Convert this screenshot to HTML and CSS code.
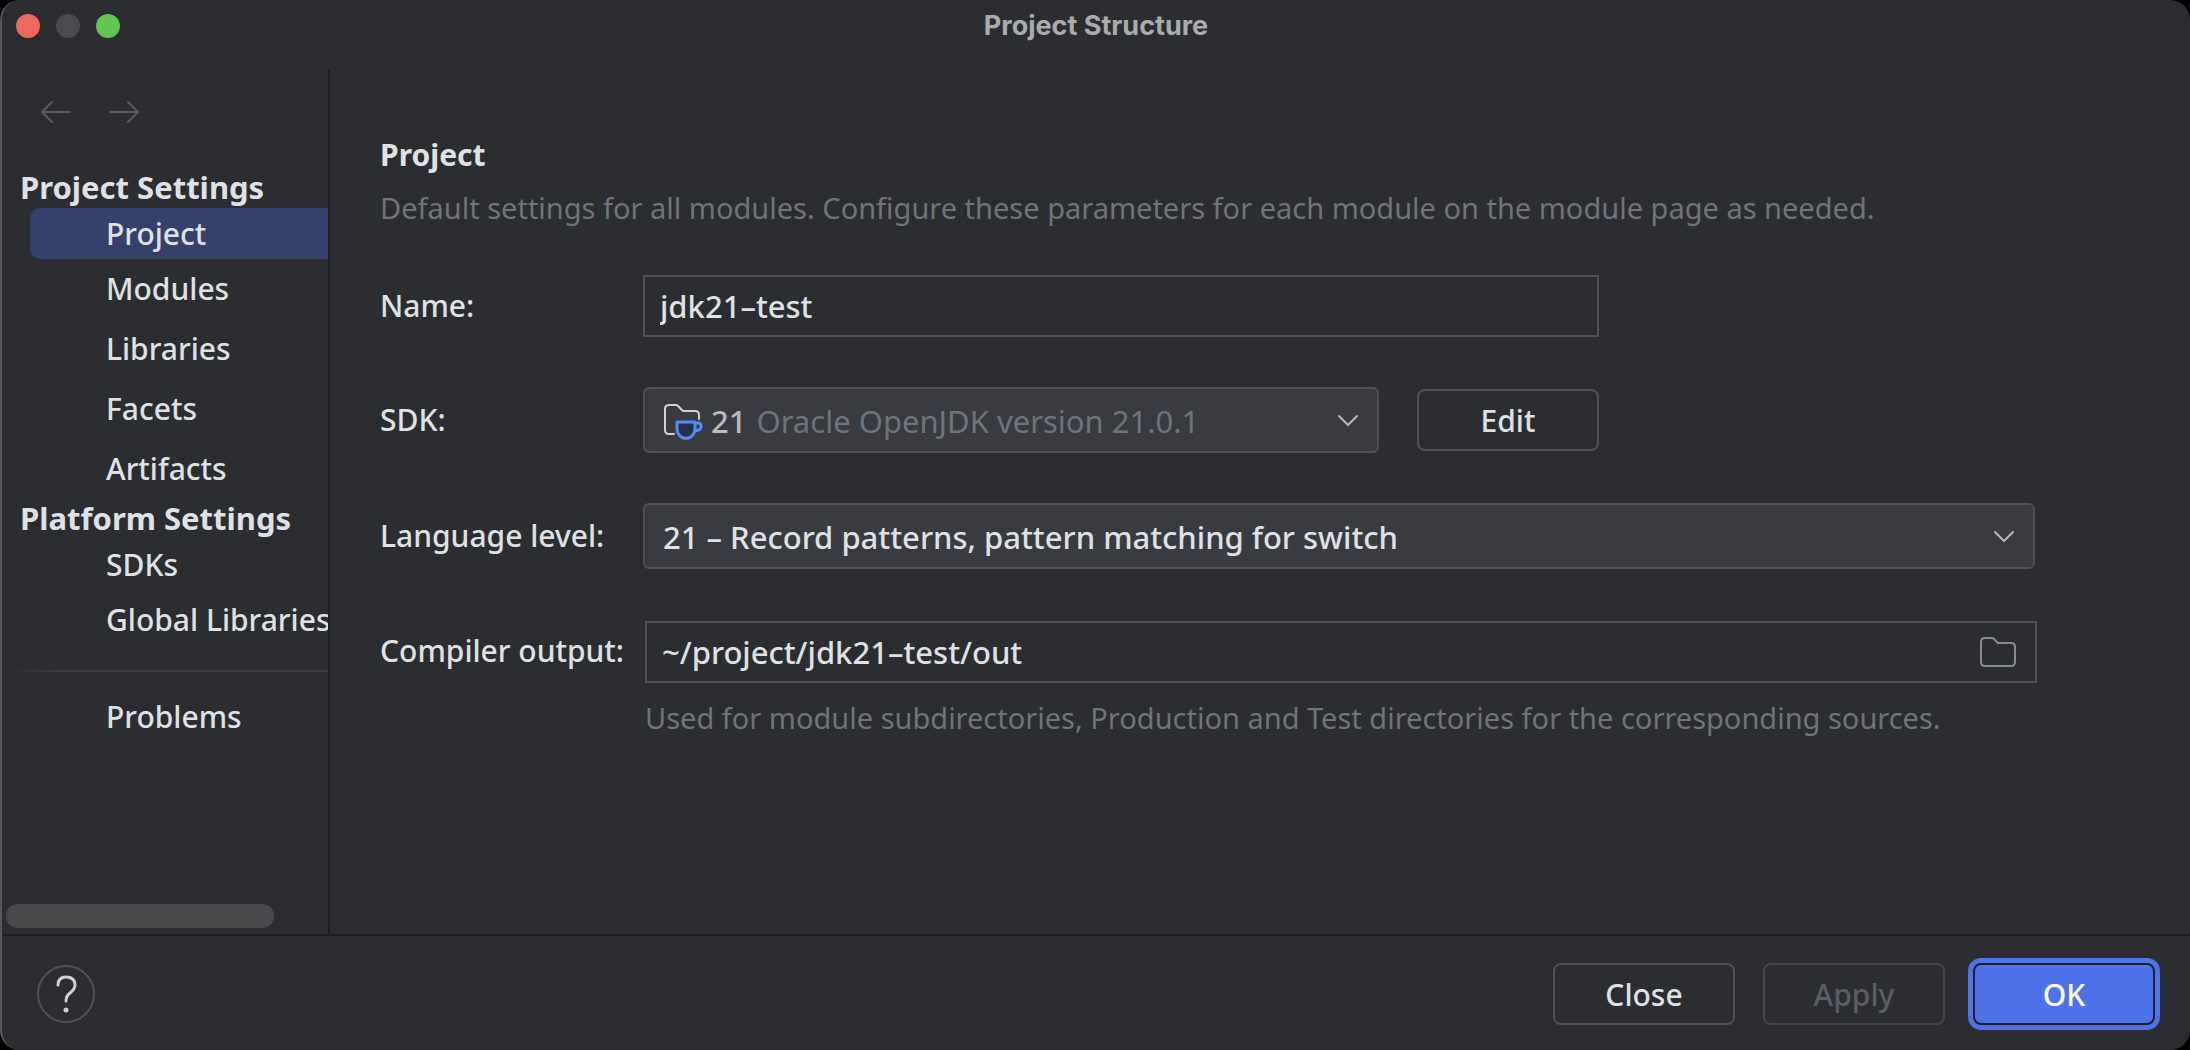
FILE: index.html
```html
<!DOCTYPE html>
<html lang="en">
<head>
<meta charset="utf-8">
<title>Project Structure</title>
<link rel="stylesheet" href="styles.css">
</head>
<body>
<div class="window">
  <header class="titlebar">
    <div class="lights">
      <button class="light light-close" aria-label="Close window"></button>
      <button class="light light-min" aria-label="Minimize" disabled></button>
      <button class="light light-zoom" aria-label="Zoom"></button>
    </div>
    <h1 class="title">Project Structure</h1>
  </header>

  <div class="body">
    <nav class="sidebar">
      <div class="history">
        <button class="arrow" aria-label="Back" disabled>
          <svg width="32" height="24" viewBox="0 0 32 24"><path d="M30 12H2M12 2L2 12L12 22"/></svg>
        </button>
        <button class="arrow" aria-label="Forward" disabled>
          <svg width="32" height="24" viewBox="0 0 32 24"><path d="M2 12H30M20 2L30 12L20 22"/></svg>
        </button>
      </div>
      <h2 class="group">Project Settings</h2>
      <a class="item item-first item-selected" href="#project">Project</a>
      <a class="item" href="#modules">Modules</a>
      <a class="item" href="#libraries">Libraries</a>
      <a class="item" href="#facets">Facets</a>
      <a class="item" href="#artifacts">Artifacts</a>
      <h2 class="group">Platform Settings</h2>
      <a class="item item-first" href="#sdks">SDKs</a>
      <a class="item" href="#global">Global Libraries</a>
      <hr class="divider">
      <a class="item" href="#problems">Problems</a>
      <div class="scrollbar"></div>
    </nav>

    <main class="page">
      <h2 class="heading">Project</h2>
      <p class="hint">Default settings for all modules. Configure these parameters for each module on the module page as needed.</p>

      <form class="form" id="project">
        <label class="label" for="name">Name:</label>
        <div class="short">
          <input class="input" id="name" type="text" value="jdk21–test">
        </div>

        <label class="label" for="sdk">SDK:</label>
        <div class="short sdk-row">
          <div class="combo">
            <svg class="sdk-icon" width="40" height="38" viewBox="0 0 40 38">
              <path class="folder" d="M11 32H6Q2 32 2 28V7Q2 3 6 3H13Q14 3 15 4L20 9H32Q36 9 36 13V17"/>
              <path class="cup" d="M14 20H32V27Q32 32 27 35.500Q23 37 19 35.500Q14 32 14 27Z"/>
              <path class="handle" d="M32 21H35Q38 21 38 24Q38 28 34 28.500H32"/>
            </svg>
            <span class="sdk-name">21</span>
            <select class="select select-muted" id="sdk">
              <option>Oracle OpenJDK version 21.0.1</option>
            </select>
            <svg class="chevron" width="22" height="14" viewBox="0 0 22 14"><path d="M2 2L11 11L20 2"/></svg>
          </div>
          <button class="button" type="button">Edit</button>
        </div>

        <label class="label" for="level">Language level:</label>
        <div class="combo">
          <select class="select" id="level">
            <option>21 – Record patterns, pattern matching for switch</option>
          </select>
          <svg class="chevron" width="22" height="14" viewBox="0 0 22 14"><path d="M2 2L11 11L20 2"/></svg>
        </div>

        <label class="label" for="output">Compiler output:</label>
        <div class="path">
          <input class="path-input" id="output" type="text" value="~/project/jdk21–test/out">
          <button class="browse" type="button" aria-label="Browse">
            <svg width="38" height="32" viewBox="0 0 38 32"><path d="M6 2H13Q14 2 15 3L19 7H32Q36 7 36 11V26Q36 30 32 30H6Q2 30 2 26V6Q2 2 6 2Z"/></svg>
          </button>
        </div>
        <p class="hint hint-field">Used for module subdirectories, Production and Test directories for the corresponding sources.</p>
      </form>
    </main>
  </div>

  <footer class="footer">
    <button class="help" aria-label="Help">
      <svg width="24" height="40" viewBox="0 0 24 40"><path d="M4 11Q4 3 12 3Q21 3 21 11Q21 15 16 19Q12 22 12 27"/><circle cx="12" cy="36" r="2.500"/></svg>
    </button>
    <button class="button">Close</button>
    <button class="button" disabled>Apply</button>
    <button class="button button-primary">OK</button>
  </footer>
</div>
</body>
</html>
```
FILE: styles.css
```css
* {
  box-sizing: border-box;
}

body {
  margin: 0;
  background: #000;
  color: #dfe1e5;
  font-family: "Noto Sans", "Open Sans", sans-serif;
  font-size: 30px;
  font-weight: 500;
  line-height: 40px;
}

h1, h2, p {
  margin: 0;
}

button, input, select {
  margin: 0;
  padding: 0;
  border: 0;
  background: none;
  color: inherit;
  font: inherit;
}

svg {
  display: block;
  fill: none;
  stroke-linecap: round;
  stroke-linejoin: round;
}

.window {
  display: flex;
  flex-direction: column;
  min-height: 100vh;
  overflow: hidden;
  border-left: 2px solid #55575a;
  border-radius: 20px;
  background: #2b2d30;
}

.titlebar {
  display: grid;
  grid-template-columns: 1fr auto 1fr;
  align-items: center;
  height: 70px;
  padding: 0 14px 19px;
}

.lights {
  display: flex;
  gap: 16px;
}

.light {
  width: 24px;
  height: 24px;
  border-radius: 50%;
}

.light-close {
  background: #ec6a5e;
}

.light-min {
  background: #4a4b4d;
}

.light-zoom {
  background: #61c554;
}

.title {
  color: #a9abad;
  font-family: Inter, sans-serif;
  font-size: 27px;
  font-weight: 700;
  line-height: 32px;
}

.body {
  display: flex;
  flex: 1;
}

.sidebar {
  display: flex;
  flex-direction: column;
  flex: 0 0 328px;
  overflow: hidden;
  border-right: 2px solid #1e1f22;
}

.history {
  display: flex;
  gap: 36px;
  padding: 30px 38px 44px;
}

.arrow path {
  stroke: #5a5b5d;
  stroke-width: 2;
}

.group {
  padding: 0 0 2px 18px;
  font-size: 31px;
  font-weight: 700;
  line-height: 38px;
}

.item {
  margin-left: 28px;
  padding-left: 76px;
  color: inherit;
  line-height: 60px;
  text-decoration: none;
  white-space: nowrap;
}

.item-first {
  line-height: 51px;
}

.item-selected {
  border-radius: 10px 0 0 10px;
  background: #35416b;
}

.divider {
  width: 100%;
  height: 2px;
  margin: 20px 0 15px;
  border: 0;
  background: linear-gradient(to right, #2b2d30 10px, #3c3d41 60px);
}

.scrollbar {
  width: 268px;
  height: 24px;
  margin: auto 0 6px 4px;
  border-radius: 12px;
  background: #48494b;
}

.page {
  flex: 1;
  min-width: 0;
  padding: 65px 155px 40px 50px;
}

.heading {
  font-size: 30px;
  font-weight: 700;
  line-height: 40px;
}

.hint {
  padding-top: 13px;
  color: #6f737a;
  font-size: 29px;
  font-weight: 400;
}

.form {
  display: grid;
  grid-template-columns: 263px 1fr;
  align-items: center;
  row-gap: 50px;
  padding-top: 47px;
}

.label {
  white-space: nowrap;
}

.short {
  max-width: 956px;
}

.input,
.path {
  width: 100%;
  height: 62px;
  padding: 0 18px 0 15px;
  border: 2px solid #4e5157;
}

.input,
.path-input,
.select {
  font-size: 31px;
}

.path {
  display: flex;
  align-items: center;
  margin: 2px 0 0 2px;
}

.path-input {
  flex: 1;
  min-width: 0;
}

.browse path {
  stroke: #868a91;
  stroke-width: 2;
}

.sdk-row {
  display: flex;
  align-items: center;
  gap: 38px;
}

.combo {
  display: flex;
  align-items: center;
  flex: 1;
  min-width: 0;
  height: 66px;
  padding: 2px 18px 0;
  border: 2px solid #4e5157;
  border-radius: 6px;
  background: #393b40;
}

.select {
  flex: 1;
  min-width: 0;
  appearance: none;
}

.select-muted {
  color: #6f737a;
  font-weight: 400;
}

.sdk-icon .folder {
  stroke: #ced0d6;
  stroke-width: 2;
}

.sdk-icon .cup {
  fill: #25324d;
  stroke: #548af7;
  stroke-width: 3;
}

.sdk-icon .handle {
  stroke: #548af7;
  stroke-width: 3;
}

.sdk-name {
  padding: 0 10px 0 8px;
  color: #bbb;
  font-size: 31px;
}

.chevron path {
  stroke: #b4b8bf;
  stroke-width: 2;
}

.hint-field {
  grid-column: 2;
  margin-top: -50px;
  padding: 15px 0 0 2px;
}

.footer {
  display: flex;
  align-items: center;
  gap: 28px;
  padding: 27px 35px 25px;
  border-top: 2px solid #1e1f22;
}

.help {
  display: grid;
  place-items: center;
  width: 58px;
  height: 58px;
  margin-right: auto;
  border: 2px solid #4e5157;
  border-radius: 50%;
}

.help path {
  stroke: #ced0d6;
  stroke-width: 3;
}

.help circle {
  fill: #ced0d6;
}

.button {
  flex: 0 0 182px;
  height: 62px;
  padding-top: 2px;
  border: 2px solid #4e5157;
  border-radius: 8px;
}

.button:disabled {
  border-color: #43454a;
  color: #5a5d63;
}

.button-primary {
  border-color: #1e1f22;
  background: #4d72ea;
  color: #fff;
  outline: 5px solid #4d72ea;
}
```
